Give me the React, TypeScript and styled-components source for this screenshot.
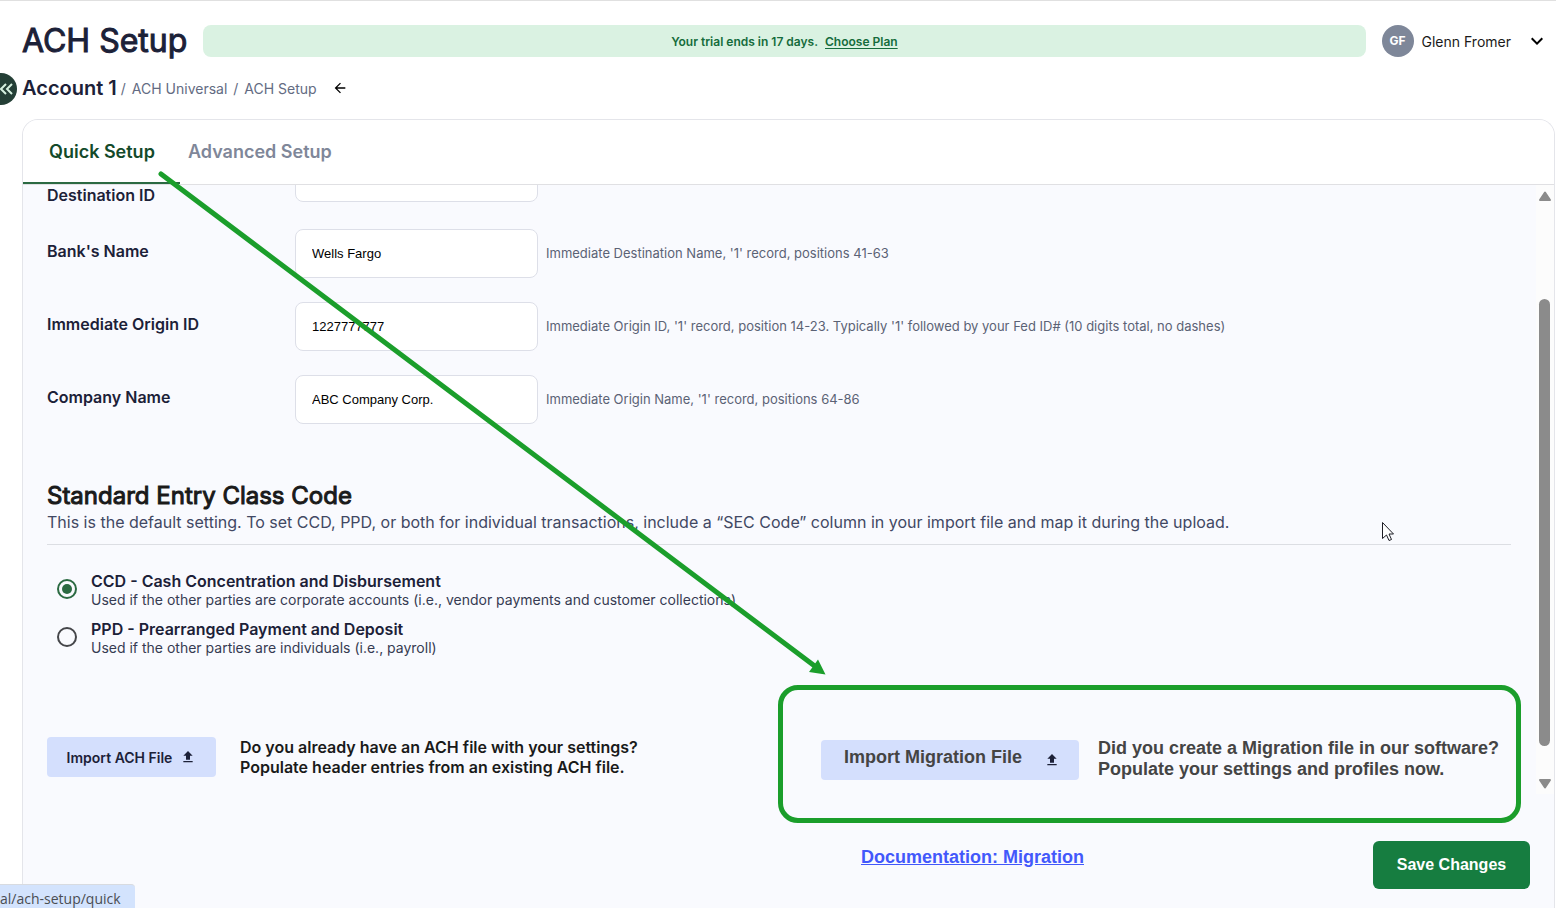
import React from "react";
import styled, { createGlobalStyle } from "styled-components";
import { MdArrowBack, MdKeyboardArrowDown, MdUpload } from "react-icons/md";

const GlobalStyle = createGlobalStyle`
  *, *::before, *::after { box-sizing: border-box; }
  body { margin: 0; background: #fff; font-family: Inter, "Liberation Sans", sans-serif; color: #1c2138; }
  h1, h2, p { margin: 0; }
  button, input { font: inherit; }
`;

const arial = `"Liberation Sans", Arial, sans-serif`;
const annotationGreen = "#1b9e2b";

const Page = styled.div`
  position: relative;
  display: flex;
  flex-direction: column;
  min-height: 100vh;
  overflow: hidden;
  border-top: 1px solid #e0e0e0;
`;

const Header = styled.header`
  display: flex;
  align-items: center;
  gap: 16px;
  padding: 16px 7px 0 22px;
`;

const Title = styled.h1`
  font-size: 32px;
  line-height: 48px;
  font-weight: 400;
  -webkit-text-stroke: 1px currentColor;
`;

const TrialBanner = styled.div`
  flex: 1;
  height: 32px;
  border-radius: 8px;
  background: #daf2e2;
  color: #156c3c;
  display: flex;
  align-items: center;
  justify-content: center;
  gap: 7px;
  font-size: 12px;
  font-weight: 600;
`;

const PlanLink = styled.a`
  color: inherit;
  text-underline-offset: 2px;
`;

const UserMenu = styled.button`
  display: flex;
  align-items: center;
  gap: 8px;
  padding: 0;
  border: 0;
  background: none;
  color: #1a1a1a;
  font-size: 14px;
  line-height: 20px;
`;

const UserName = styled.span`
  padding-top: 2px;
`;

const Avatar = styled.span`
  display: grid;
  place-items: center;
  width: 32px;
  height: 32px;
  border-radius: 50%;
  background: #7e8799;
  color: #fff;
  font-size: 12px;
  font-weight: 700;
`;

const MenuChevron = styled(MdKeyboardArrowDown)`
  margin-left: 6px;
  color: #000;
`;

const Breadcrumb = styled.nav`
  display: flex;
  align-items: center;
  gap: 6px;
  padding: 6px 22px 0;
  height: 39px;
  font-size: 14px;
  color: #636b82;
`;

const AccountName = styled.span`
  margin-right: -2px;
  font-size: 20px;
  font-weight: 600;
  color: #1c2138;
`;

const Crumb = styled.span`
  padding-top: 2px;
`;

const CrumbLink = styled.a`
  padding-top: 2px;
  color: inherit;
  text-decoration: none;
`;

const BackButton = styled.button`
  display: grid;
  padding: 0;
  margin-left: 9px;
  border: 0;
  background: none;
  color: #000;
`;

const CollapseButton = styled.button`
  position: absolute;
  left: -15px;
  top: 72px;
  width: 32px;
  height: 32px;
  padding: 0 4px 0 0;
  display: flex;
  align-items: center;
  justify-content: flex-end;
  border: 0;
  border-radius: 50%;
  background: #243f36;
  color: #d5f0df;
`;

const Panel = styled.main`
  flex: 1;
  display: flex;
  flex-direction: column;
  margin: 15px 1px 0 22px;
  border: 1px solid #e4e5ea;
  border-bottom: 0;
  border-radius: 16px 16px 0 0;
  background: #f9fafe;
  overflow: hidden;
`;

const Tabs = styled.div`
  display: flex;
  height: 65px;
  background: #fff;
  border-bottom: 1px solid #e0e0e3;
`;

const Tab = styled.button<{ $active?: boolean }>`
  height: 64px;
  padding: 0 8px 0 ${(p) => (p.$active ? 26 : 8)}px;
  width: ${(p) => (p.$active ? "157px" : "auto")};
  text-align: left;
  border: 0;
  border-bottom: 2px solid ${(p) => (p.$active ? "#2b6a42" : "transparent")};
  background: none;
  font-size: 18px;
  font-weight: 600;
  color: ${(p) => (p.$active ? "#144a2a" : "#7f8799")};
`;

const Scroller = styled.div`
  display: flex;
  align-items: flex-start;
  overflow: hidden;
`;

const Content = styled.div`
  flex: 1;
  min-width: 0;
`;

const Fields = styled.div`
  display: grid;
  gap: 24px;
  padding: 0 24px;
  margin-top: -32px;
`;

const Field = styled.div`
  display: grid;
  grid-template-columns: 248px 243px 1fr;
  align-items: center;
  height: 49px;

  &:first-child { margin-bottom: 3px; }
`;

const FieldLabel = styled.label`
  padding-bottom: 5px;
  font-size: 16px;
  font-weight: 600;
`;

const ClippedLabel = styled(FieldLabel)`
  align-self: end;
  padding: 0;
  line-height: 14px;
`;

const TextInput = styled.input`
  width: 100%;
  height: 49px;
  padding: 0 16px;
  border: 1px solid #dddfe8;
  border-radius: 8px;
  background: #fff;
  color: #000;
  font-family: ${arial};
  font-size: 13px;
`;

const Hint = styled.span`
  padding: 0 0 1px 8px;
  font-size: 13px;
  color: #5b6275;
`;

const EntryClass = styled.section`
  padding: 56px 25px 0 24px;
`;

const SectionTitle = styled.h2`
  font-size: 24px;
  line-height: 32px;
  font-weight: 400;
  -webkit-text-stroke: 1px currentColor;
  color: #1a1a1a;
`;

const SectionText = styled.p`
  padding-bottom: 11px;
  border-bottom: 1px solid #dcdee3;
  font-size: 16px;
  line-height: 21px;
  color: #414863;
`;

const Options = styled.div`
  display: grid;
  gap: 8px;
  padding: 24px 10px 0;
`;

const Option = styled.label`
  display: flex;
  align-items: center;
  gap: 14px;
`;

const Radio = styled.input`
  appearance: none;
  display: grid;
  place-items: center;
  width: 20px;
  height: 20px;
  margin: 0;
  border: 2px solid #45464a;
  border-radius: 50%;

  &:checked { border-color: #2b6a42; }
  &:checked::before {
    content: "";
    width: 10px;
    height: 10px;
    border-radius: 50%;
    background: #2b6a42;
  }
`;

const OptionBody = styled.span`
  padding-top: 2px;
`;

const OptionTitle = styled.span`
  display: block;
  font-size: 16px;
  line-height: 20px;
  font-weight: 600;
`;

const OptionText = styled.span`
  display: block;
  font-size: 14px;
  line-height: 18px;
  color: #363b52;
`;

const Imports = styled.section`
  display: flex;
  align-items: flex-start;
  justify-content: space-between;
  padding: 28px 15px 0 24px;
`;

const ImportGroup = styled.div`
  display: flex;
  gap: 24px;
  padding-top: 52px;
`;

const MigrationGroup = styled.div`
  display: flex;
  align-items: flex-end;
  gap: 19px;
  padding: 48px 17px 38px 38px;
  border: 5px solid ${annotationGreen};
  border-radius: 20px;
`;

const ImportButton = styled.button<{ $wide?: boolean }>`
  display: flex;
  align-items: center;
  justify-content: ${(p) => (p.$wide ? "space-between" : "center")};
  gap: 8px;
  width: ${(p) => (p.$wide ? 258 : 169)}px;
  height: 40px;
  padding: ${(p) => (p.$wide ? "0 19px 0 23px" : "0")};
  border: 0;
  border-radius: 4px;
  background: #d4dffd;
  color: #1c2138;
  font-size: 14px;
  font-weight: 600;
  flex: none;
`;

const MigrationLabel = styled.span`
  padding-bottom: 6px;
  font-family: ${arial};
  font-size: 18px;
  font-weight: 700;
  color: #444;
`;

const ImportText = styled.p`
  font-size: 16px;
  line-height: 20px;
  font-weight: 600;
  color: #1a1a1a;
`;

const MigrationText = styled.p`
  font-family: ${arial};
  font-size: 18px;
  line-height: 21px;
  font-weight: 700;
  color: #444;
`;

const Scrollbar = styled.div`
  flex: none;
  display: flex;
  flex-direction: column;
  align-items: center;
  width: 18px;
  height: 609px;
  padding: 6px 1px 5px 0;
  background: #fcfcfc;
`;

const ScrollThumb = styled.div`
  width: 11px;
  height: 447px;
  margin: 97px 0 auto;
  border-radius: 6px;
  background: #8b8b8b;
`;

const Footer = styled.footer`
  display: flex;
  align-items: flex-start;
  justify-content: flex-end;
  gap: 289px;
  padding: 18px 24px 19px;
`;

const DocLink = styled.a`
  padding-top: 6px;
  font-family: ${arial};
  font-size: 18px;
  line-height: 21px;
  font-weight: 700;
  color: #4258fb;
`;

const SaveButton = styled.button`
  width: 157px;
  height: 48px;
  border: 0;
  border-radius: 6px;
  background: #167d40;
  color: #fff;
  font-family: ${arial};
  font-size: 16px;
  font-weight: 700;
`;

const StatusBar = styled.div`
  position: fixed;
  left: 0;
  bottom: 0;
  height: 24px;
  width: 135px;
  padding-top: 2px;
  border-top: 1px solid #d8dbe0;
  border-radius: 0 4px 0 0;
  background: #d3e3fd;
  color: #4a4d52;
  font-family: "Open Sans", "Noto Sans", sans-serif;
  font-size: 14px;
  line-height: 24px;
`;

const Pointer = styled.svg`
  position: absolute;
  left: 0;
  top: -1px;
  pointer-events: none;
`;

const fields = [
  { id: "bank", label: "Bank's Name", value: "Wells Fargo", hint: "Immediate Destination Name, '1' record, positions 41-63" },
  { id: "origin", label: "Immediate Origin ID", value: "1227777777", hint: "Immediate Origin ID, '1' record, position 14-23. Typically '1' followed by your Fed ID# (10 digits total, no dashes)" },
  { id: "company", label: "Company Name", value: "ABC Company Corp.", hint: "Immediate Origin Name, '1' record, positions 64-86" },
];

const options = [
  { id: "ccd", title: "CCD - Cash Concentration and Disbursement", text: "Used if the other parties are corporate accounts (i.e., vendor payments and customer collections)" },
  { id: "ppd", title: "PPD - Prearranged Payment and Deposit", text: "Used if the other parties are individuals (i.e., payroll)" },
];

export default function App() {
  return (
    <Page>
      <GlobalStyle />
      <Header>
        <Title>ACH Setup</Title>
        <TrialBanner>
          <span>Your trial ends in 17 days.</span>
          <PlanLink href="#plans">Choose Plan</PlanLink>
        </TrialBanner>
        <UserMenu>
          <Avatar>GF</Avatar>
          <UserName>Glenn Fromer</UserName>
          <MenuChevron size={24} />
        </UserMenu>
      </Header>

      <CollapseButton aria-label="Collapse sidebar">
        <svg width="14" height="12" viewBox="0 0 14 12" fill="none" stroke="currentColor" strokeWidth="2">
          <path d="M7 1 2 6l5 5M13 1 8 6l5 5" />
        </svg>
      </CollapseButton>

      <Breadcrumb aria-label="Breadcrumb">
        <AccountName>Account 1</AccountName>
        <Crumb>/</Crumb>
        <CrumbLink href="#universal">ACH Universal</CrumbLink>
        <Crumb>/</Crumb>
        <CrumbLink href="#setup">ACH Setup</CrumbLink>
        <BackButton aria-label="Back">
          <MdArrowBack size={16} />
        </BackButton>
      </Breadcrumb>

      <Panel>
        <Tabs role="tablist">
          <Tab role="tab" aria-selected $active>Quick Setup</Tab>
          <Tab role="tab" aria-selected={false}>Advanced Setup</Tab>
        </Tabs>

        <Scroller>
          <Content>
            <Fields>
              <Field>
                <ClippedLabel htmlFor="destination">Destination ID</ClippedLabel>
                <TextInput id="destination" />
              </Field>
              {fields.map((f) => (
                <Field key={f.id}>
                  <FieldLabel htmlFor={f.id}>{f.label}</FieldLabel>
                  <TextInput id={f.id} defaultValue={f.value} />
                  <Hint>{f.hint}</Hint>
                </Field>
              ))}
            </Fields>

            <EntryClass>
              <SectionTitle>Standard Entry Class Code</SectionTitle>
              <SectionText>
                This is the default setting. To set CCD, PPD, or both for individual transactions, include a “SEC Code” column in your import file and map it during the upload.
              </SectionText>
              <Options>
                {options.map((o) => (
                  <Option key={o.id}>
                    <Radio type="radio" name="sec" defaultChecked={o.id === "ccd"} />
                    <OptionBody>
                      <OptionTitle>{o.title}</OptionTitle>
                      <OptionText>{o.text}</OptionText>
                    </OptionBody>
                  </Option>
                ))}
              </Options>
            </EntryClass>

            <Imports>
              <ImportGroup>
                <ImportButton>
                  Import ACH File
                  <MdUpload size={16} />
                </ImportButton>
                <ImportText>
                  Do you already have an ACH file with your settings?
                  <br />
                  Populate header entries from an existing ACH file.
                </ImportText>
              </ImportGroup>
              <MigrationGroup>
                <ImportButton $wide>
                  <MigrationLabel>Import Migration File</MigrationLabel>
                  <MdUpload size={16} />
                </ImportButton>
                <MigrationText>
                  Did you create a Migration file in our software?
                  <br />
                  Populate your settings and profiles now.
                </MigrationText>
              </MigrationGroup>
            </Imports>
          </Content>

          <Scrollbar aria-hidden="true">
            <svg width="14" height="11" viewBox="0 0 14 11">
              <path d="M7 1.5 12 9H2Z" fill="#8b8b8b" stroke="#8b8b8b" strokeWidth="2" strokeLinejoin="round" />
            </svg>
            <ScrollThumb />
            <svg width="14" height="11" viewBox="0 0 14 11">
              <path d="M7 9.5 12 2H2Z" fill="#8b8b8b" stroke="#8b8b8b" strokeWidth="2" strokeLinejoin="round" />
            </svg>
          </Scrollbar>
        </Scroller>

        <Footer>
          <DocLink href="#migration">Documentation: Migration</DocLink>
          <SaveButton>Save Changes</SaveButton>
        </Footer>
      </Panel>

      <Pointer width="1400" height="690" viewBox="0 0 1400 690" aria-hidden="true">
        <path d="M161 174 816 667" stroke={annotationGreen} strokeWidth="5" strokeLinecap="round" />
        <path d="M825.500 674.500 809 672 818 659.500Z" fill={annotationGreen} />
        <path d="M1382.500 522.500V538.500L1386.500 535L1389 540.500L1391.500 539.500L1389 534H1393.500Z" fill="#fff" stroke="#1d1d25" />
      </Pointer>

      <StatusBar>al/ach-setup/quick</StatusBar>
    </Page>
  );
}
